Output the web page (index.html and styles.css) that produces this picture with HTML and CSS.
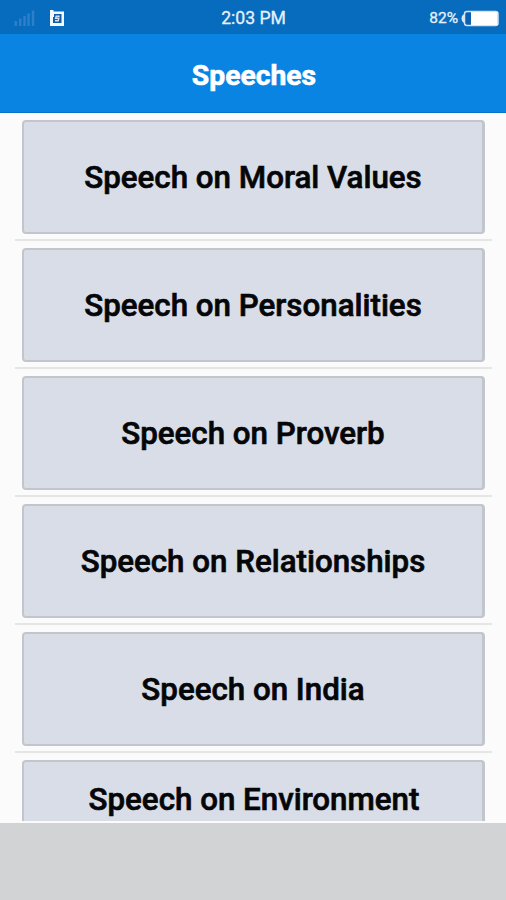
FILE: index.html
```html
<!DOCTYPE html>
<html lang="en">
<head>
<meta charset="utf-8">
<title>Speeches</title>
<link rel="stylesheet" href="styles.css">
</head>
<body>
<div class="screen">
  <header class="status">
    <div class="status-left">
      <svg class="signal" width="21" height="16" viewBox="0 0 21 16" fill="#2c7fc8">
        <rect x="0.5" y="11" width="2.5" height="5"/><rect x="5" y="8.5" width="2.5" height="7.5"/><rect x="9.3" y="6" width="2.5" height="10"/><rect x="13.3" y="3.5" width="2.5" height="12.5"/><rect x="17.8" y="0.5" width="2.5" height="15.5"/>
      </svg>
      <svg class="app" width="15" height="17" viewBox="0 0 15 17">
        <path fill="#f4f9ff" d="M0 0h3.5v1.5H14V16H0z"/>
        <path fill="#125ca7" d="M4 4h7.5v9H3V7h1z"/>
        <path fill="none" stroke="#cfe2f7" stroke-width="1.4" d="M9.7 6.2H6.2L5.6 8.3h3.2l-.6 2.5H5"/>
      </svg>
    </div>
    <div class="clock">2:03 PM</div>
    <div class="status-right">
      <span class="percent">82%</span>
      <svg class="battery" width="38" height="17" viewBox="0 0 38 17">
        <path fill="#d9e9fa" d="M3 4.5v8H2.2Q.5 10.8.5 8.5T2.2 4.5z"/>
        <rect x="3.5" y="1.5" width="33.5" height="14" rx="2.5" fill="#0b61ae" stroke="#d4e3f7" stroke-width="1.5"/>
        <path fill="#fff" d="M10 2h26.5v13H10z"/>
      </svg>
    </div>
  </header>
  <h1 class="title">Speeches</h1>
  <main class="list">
    <div class="row"><button class="card">Speech on Moral Values</button></div>
    <div class="row"><button class="card">Speech on Personalities</button></div>
    <div class="row"><button class="card">Speech on Proverb</button></div>
    <div class="row"><button class="card">Speech on Relationships</button></div>
    <div class="row"><button class="card">Speech on India</button></div>
    <div class="row last"><button class="card">Speech on Environment</button></div>
  </main>
  <footer class="banner"></footer>
</div>
</body>
</html>
```
FILE: styles.css
```css
* { box-sizing: border-box; }
body { margin: 0; font-family: Roboto, sans-serif; }
.screen { display: flex; flex-direction: column; width: 506px; height: 900px; overflow: hidden; background: #fbfbfb; }
.status { display: grid; grid-template-columns: 1fr auto 1fr; align-items: center; height: 34px; padding: 2px 7px 0 14px; background: #076cbd; color: #e6f1fc; -webkit-text-stroke: 0.3px #e6f1fc; }
.status-left { display: flex; align-items: center; gap: 15px; }
.clock { font-size: 17.6px; line-height: 20px; transform: translateX(-3px); }
.status-right { display: flex; justify-content: flex-end; align-items: center; gap: 3px; }
.percent { font-size: 15.5px; line-height: 20px; }
.title { height: 79px; margin: 0; padding: 3px 0 0 2px; background: #0984e3; border-bottom: 1px solid #0873cc; color: #fff; font-size: 28.3px; font-weight: 700; line-height: 77px; text-align: center; -webkit-text-stroke: 0.6px #fff; }
.list { height: 708px; padding: 0 14px 0 15px; overflow: hidden; }
.row { height: 128px; padding: 7px 7px 0; border-bottom: 2px solid #e4e5e5; }
.card { display: block; width: 100%; height: 114px; padding: 1px 0 0; border: 2px solid #c2c6cc; border-right-width: 3px; border-radius: 4px; background: #d8dde7; color: #050608; font: 500 31.3px/1 Roboto, sans-serif; text-align: center; -webkit-text-stroke: 0.65px #050608; }
.last .card { height: 62px; padding: 16px 0 0 2px; border-bottom: 0; border-radius: 4px 4px 0 0; }
.last { border: 0; }
.banner { height: 77px; margin-top: 2px; background: #d1d3d5; }
```
